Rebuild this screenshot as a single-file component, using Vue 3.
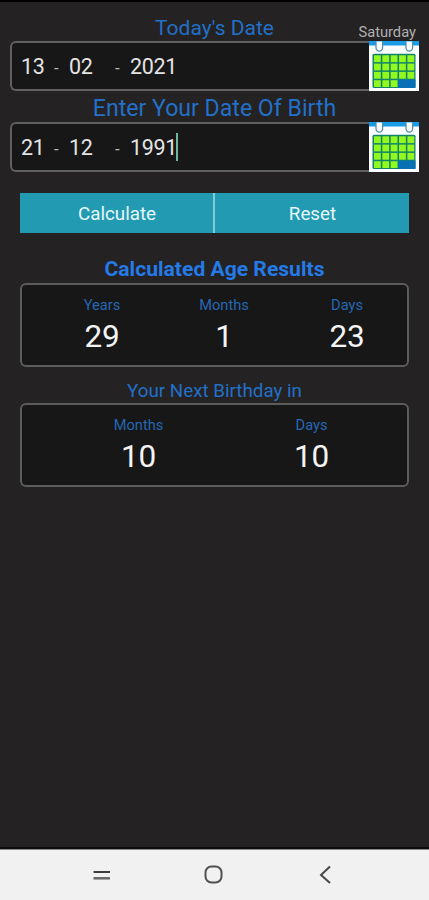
<template>
  <div class="screen">
    <main class="content">
      <header class="heading today">
        <h2>Today's Date</h2>
        <span class="weekday">Saturday</span>
      </header>
      <template v-for="(field, i) in fields" :key="field.id">
        <h2 v-if="i === 1" class="heading birth">Enter Your Date Of Birth</h2>
        <div class="date-row">
          <div class="date-field">
            <span class="day">{{ field.day }}</span>
            <span class="dash">-</span>
            <span class="month">{{ field.month }}</span>
            <span class="dash">-</span>
            <span class="year">{{ field.year }}</span>
            <span v-if="field.active" class="caret"></span>
          </div>
          <svg class="calendar" viewBox="0 0 50 50">
            <rect width="50" height="50" fill="#fbfeff" />
            <rect width="50" height="4.5" fill="#1b9ce8" />
            <rect x="3.5" y="12.8" width="43" height="34.2" rx="1.5" fill="#128568" />
            <rect x="29" y="38.5" width="17.5" height="8.5" fill="#0870b4" />
            <rect
              v-for="cell in cells"
              :key="cell.id"
              :x="cell.x"
              :y="cell.y"
              width="6.8"
              height="6.8"
              fill="#92f820"
            />
            <g fill="#fff" stroke="#4f8fac" stroke-width="1.3">
              <path d="M7 0.5V6.5a3.3 3.7 0 0 0 6.6 0V0.5" />
              <path d="M37 0.5V6.5a3.3 3.7 0 0 0 6.6 0V0.5" />
            </g>
          </svg>
        </div>
      </template>

      <div class="actions">
        <button>Calculate</button>
        <button>Reset</button>
      </div>

      <h2 class="heading results">Calculated Age Results</h2>
      <section class="card age">
        <div v-for="item in age" :key="item.label" class="stat">
          <span class="label">{{ item.label }}</span>
          <span class="value">{{ item.value }}</span>
        </div>
      </section>

      <h2 class="heading next">Your Next Birthday in</h2>
      <section class="card birthday">
        <div v-for="item in nextBirthday" :key="item.label" class="stat">
          <span class="label">{{ item.label }}</span>
          <span class="value">{{ item.value }}</span>
        </div>
      </section>
    </main>

    <nav class="nav-bar">
      <svg viewBox="0 0 20 20">
        <path d="M1.5 7H18" stroke="#3c3c3c" stroke-width="2" />
        <path d="M1.5 13.3H18" stroke="#666" stroke-width="2.5" />
      </svg>
      <svg viewBox="0 0 20 20">
        <rect x="1.5" y="1.5" width="16" height="16" rx="6" fill="none" stroke="#505050" stroke-width="2" />
      </svg>
      <svg viewBox="0 0 20 20">
        <path d="M14 1.5L5 10L14 18" fill="none" stroke="#484848" stroke-width="2" />
      </svg>
    </nav>
  </div>
</template>

<script setup>
const fields = [
  { id: 'today', day: '13', month: '02', year: '2021', active: false },
  { id: 'birth', day: '21', month: '12', year: '1991', active: true }
]

// 18 day cells, five per row
const cells = Array.from({ length: 18 }, (_, i) => ({
  id: i,
  x: 5 + (i % 5) * 8.35,
  y: 14.3 + Math.floor(i / 5) * 8.3
}))

const age = [
  { label: 'Years', value: 29 },
  { label: 'Months', value: 1 },
  { label: 'Days', value: 23 }
]

const nextBirthday = [
  { label: 'Months', value: 10 },
  { label: 'Days', value: 10 }
]
</script>

<style>
body {
  background: #242223;
}
</style>

<style scoped>
.screen {
  box-sizing: border-box;
  display: flex;
  flex-direction: column;
  height: 900px;
  border-top: 2px solid #000;
  background: #242223;
  font-family: Roboto, "Liberation Sans", sans-serif;
}
.content {
  flex: 1;
}
h2 {
  margin: 0;
  font-size: inherit;
  font-weight: inherit;
}
.heading {
  color: #2370c8;
  text-align: center;
  white-space: nowrap;
}
.today {
  display: grid;
  grid-template-columns: 1fr auto 1fr;
  height: 39px;
  font-size: 21px;
  line-height: 52px;
}
.today h2 {
  grid-column: 2;
}
.weekday {
  justify-self: end;
  padding-right: 13px;
  color: #b0b0b0;
  font-size: 14.7px;
  line-height: 61px;
}
.birth {
  height: 31px;
  font-size: 23.1px;
  line-height: 36px;
}
.date-row {
  display: flex;
  height: 50px;
  padding: 0 10px;
}
.date-field {
  box-sizing: border-box;
  flex: 1;
  display: grid;
  grid-template-columns: 33px 15px 46px 15px auto 1fr;
  align-items: center;
  height: 50px;
  padding-left: 9px;
  border: 2px solid #606060;
  border-right: 0;
  border-radius: 6px 0 0 6px;
  background: #171717;
  color: #e4e4e4;
  font-size: 21.5px;
}
.day,
.month,
.year {
  letter-spacing: -0.3px;
}
.dash {
  padding-top: 3px;
  color: #b8b8b8;
  font-size: 17px;
}
.caret {
  width: 2px;
  height: 28px;
  margin-left: -1px;
  background: #6cb89e;
}
.calendar {
  width: 50px;
  height: 50px;
}
.actions {
  display: grid;
  grid-template-columns: 193px 1fr;
  height: 40px;
  margin: 21px 20px 0;
}
.actions button {
  padding: 2px 0 0 1px;
  border: 0;
  background: #219ab2;
  color: #e6f7fa;
  font: 18.8px Roboto, "Liberation Sans", sans-serif;
}
.actions button + button {
  border-left: 2px solid #83cbd8;
}
.results {
  height: 50px;
  color: #247ae6;
  font-size: 21.1px;
  font-weight: 700;
  line-height: 72px;
}
.card {
  box-sizing: border-box;
  display: grid;
  height: 84px;
  margin: 0 20px;
  border: 2px solid #5c5c5c;
  border-radius: 6px;
  background: #171717;
}
.age {
  grid-template-columns: 120px 124px 122px;
  padding-left: 20px;
}
.birthday {
  grid-template-columns: 173px 173px;
  padding-left: 30px;
}
.stat {
  display: flex;
  flex-direction: column;
  align-items: center;
  padding-top: 10px;
}
.label {
  color: #2567b4;
  font-size: 14.6px;
  line-height: 20px;
}
.value {
  color: #f4f4f4;
  font-size: 31.5px;
  line-height: 43px;
  letter-spacing: -0.3px;
}
.next {
  height: 36px;
  font-size: 18.8px;
  line-height: 48px;
}
.nav-bar {
  box-sizing: border-box;
  display: flex;
  gap: 92px;
  height: 51px;
  padding: 15px 0 0 92px;
  border-top: 1px solid #8c8c8c;
  background: #f1f1f1;
  box-shadow: 0 -2px 0 #0c0b0c;
}
.nav-bar svg {
  width: 20px;
  height: 20px;
}
</style>
